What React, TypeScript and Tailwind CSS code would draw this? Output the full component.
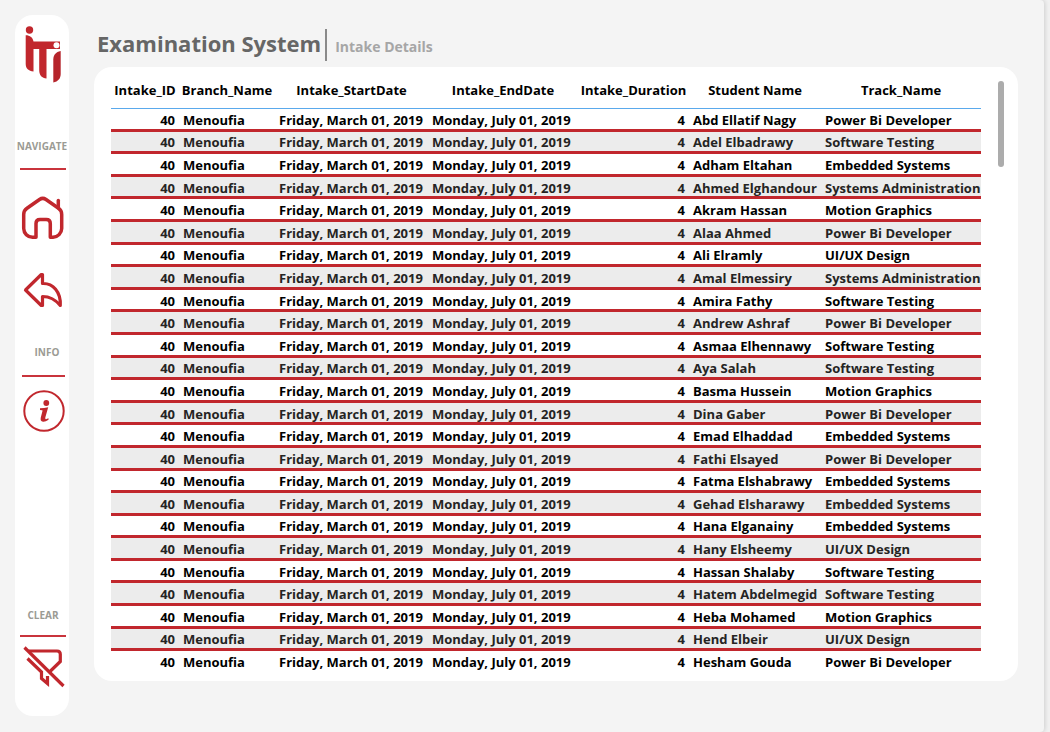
import React from "react";

type Row = [string, string];

const rows: Row[] = [
  ["Abd Ellatif Nagy", "Power Bi Developer"],
  ["Adel Elbadrawy", "Software Testing"],
  ["Adham Eltahan", "Embedded Systems"],
  ["Ahmed Elghandour", "Systems Administration"],
  ["Akram Hassan", "Motion Graphics"],
  ["Alaa Ahmed", "Power Bi Developer"],
  ["Ali Elramly", "UI/UX Design"],
  ["Amal Elmessiry", "Systems Administration"],
  ["Amira Fathy", "Software Testing"],
  ["Andrew Ashraf", "Power Bi Developer"],
  ["Asmaa Elhennawy", "Software Testing"],
  ["Aya Salah", "Software Testing"],
  ["Basma Hussein", "Motion Graphics"],
  ["Dina Gaber", "Power Bi Developer"],
  ["Emad Elhaddad", "Embedded Systems"],
  ["Fathi Elsayed", "Power Bi Developer"],
  ["Fatma Elshabrawy", "Embedded Systems"],
  ["Gehad Elsharawy", "Embedded Systems"],
  ["Hana Elganainy", "Embedded Systems"],
  ["Hany Elsheemy", "UI/UX Design"],
  ["Hassan Shalaby", "Software Testing"],
  ["Hatem Abdelmegid", "Software Testing"],
  ["Heba Mohamed", "Motion Graphics"],
  ["Hend Elbeir", "UI/UX Design"],
  ["Hesham Gouda", "Power Bi Developer"],
];

const columns = [
  { name: "Intake_ID", width: "w-[68px]" },
  { name: "Branch_Name", width: "w-24" },
  { name: "Intake_StartDate", width: "w-[153px]" },
  { name: "Intake_EndDate", width: "w-[150px]" },
  { name: "Intake_Duration", width: "w-[111px]" },
  { name: "Student Name", width: "w-[132px]" },
  { name: "Track_Name", width: "w-40" },
];

function Logo() {
  return (
    <svg viewBox="0 0 36 58" className="h-[58px] w-9" role="img" aria-label="ITI" fill="#c1272d">
      <circle cx="4.500" cy="4" r="3.700" />
      <path d="M0.700 9.200C5 9.200 8 11.500 8.500 15.500H35V23H21.500V52.500C17 52 14.200 49.500 14.200 44V23H8.500V45.500C3.500 45 0.700 42.500 0.700 38Z" />
      <circle cx="31.500" cy="19.200" r="3" fill="#fff" />
      <path d="M35.700 25C30.800 26 28.300 29 28.300 33.500V56.500C33 55.500 35.700 52.500 35.700 48Z" fill="#b5242b" />
    </svg>
  );
}

function HomeIcon() {
  return (
    <svg viewBox="0 0 44 44" className="h-11 w-11" fill="none" stroke="#c1272d" strokeWidth="3.5" strokeLinecap="round" strokeLinejoin="round" aria-hidden="true">
      <path d="M15 40V27.500Q15 23.500 19 23.500H25.300Q29.300 23.500 29.300 27.500V41.300H32A9 9 0 0 0 40.700 32.500V18.500Q40.700 14.500 37.500 12.300L25 3.500Q21.800 1.300 18.500 3.500L6 12.300Q2.700 14.500 2.700 18.500V32.500A9 9 0 0 0 11.500 41.300H15V40" />
      <path d="M37.300 12V4.500" />
    </svg>
  );
}

function BackIcon() {
  return (
    <svg viewBox="0 0 40 36" className="h-9 w-10" fill="none" stroke="#c1272d" strokeWidth="3.2" strokeLinejoin="round" aria-hidden="true">
      <path d="M19.500 2.500V11.500C30 11 38 20 37.300 33.500C32 27 27 24.500 19.500 24.500V33.500H18.300L2.500 18L18.300 2.500Z" />
    </svg>
  );
}

function InfoIcon() {
  return (
    <svg viewBox="0 0 42 42" className="h-[42px] w-[42px]" aria-hidden="true">
      <circle cx="21" cy="21" r="19.700" fill="none" stroke="#c1272d" strokeWidth="2" />
      <circle cx="23.300" cy="13" r="2.900" fill="#c1272d" />
      <path d="M17 18.300Q21 18 25.200 17.200L22.300 27.500Q22 29.300 23 29.200Q24 29 25.500 28.300L25.500 29.800Q22.500 31.900 20 31.700Q16.900 31.400 17.800 27.500L19.600 20.600Q19.600 20 17 20Z" fill="#c1272d" />
    </svg>
  );
}

function ClearIcon() {
  return (
    <svg viewBox="0 0 42 42" className="h-[42px] w-[42px]" fill="none" stroke="#c1272d" strokeWidth="3.2" aria-hidden="true">
      <path d="M1.500 1.500L40.500 40" />
      <path d="M6 5H34Q37.300 5 37.300 8.300V15.500L27 25.500" />
      <path d="M4.500 12.500L18.500 26V32.500L24.500 37.500V30" />
    </svg>
  );
}

type SectionProps = { label: string; labelClass?: string; ruleClass: string; children: React.ReactNode };

function Section({ label, labelClass = "", ruleClass, children }: SectionProps) {
  return (
    <section className="flex flex-col items-center">
      <h2 className={`text-[10px] leading-4 font-bold text-[#9b9b94] ${labelClass}`}>{label}</h2>
      <div className={`h-0.5 bg-[#c9343c] ${ruleClass}`} />
      {children}
    </section>
  );
}

export default function App() {
  return (
    <div className="min-h-screen bg-[#f0f0f0] pr-1.5">
      <div className="flex min-h-screen rounded-r bg-[#f4f4f4] pr-[26px] pl-[15px] font-['Open_Sans','Noto_Sans',sans-serif] shadow-[1px_0_4px_rgba(0,0,0,0.14)]">
        <nav className="mt-[15px] mb-4 flex w-[54px] shrink-0 flex-col items-center rounded-[18px] bg-white pt-[11px] pb-7 pl-0.5">
          <Logo />
          <div className="mt-[54px]">
            <Section label="NAVIGATE" labelClass="pr-0.5" ruleClass="mt-3.5 w-[46px]">
              <button aria-label="Home" className="mt-[26px]"><HomeIcon /></button>
              <button aria-label="Back" className="mt-8"><BackIcon /></button>
            </Section>
          </div>
          <div className="mt-9">
            <Section label="INFO" labelClass="pl-2" ruleClass="mt-[15px] w-[43px]">
              <button aria-label="Information" className="mt-[13px] pl-0.5"><InfoIcon /></button>
            </Section>
          </div>
          <div className="mt-auto">
            <Section label="CLEAR" ruleClass="mt-3 w-[46px]">
              <button aria-label="Clear filters" className="mt-[9px] pl-0.5"><ClearIcon /></button>
            </Section>
          </div>
        </nav>
        <main className="ml-[25px] flex min-w-0 flex-1 flex-col pt-[29px] pb-[51px]">
          <header className="flex h-8 items-center pl-[3px]">
            <h1 className="pb-1 text-[22px] leading-7 font-bold text-[#666]">Examination System</h1>
            <div className="ml-1 h-8 w-0.5 bg-[#8a8a8a]" />
            <p className="ml-2 pt-1 text-[14px] leading-6 font-bold text-[#a6a6a6]">Intake Details</p>
          </header>
          <div className="mt-1.5 flex flex-1 items-start rounded-[18px] bg-white pt-3.5 pr-3.5 pl-[17px]">
            <table className="h-[593px] w-[870px] table-fixed border-separate border-spacing-0 text-[13px] leading-4 font-bold whitespace-nowrap text-black">
              <thead>
                <tr className="h-7">
                  {columns.map((c) => (
                    <th key={c.name} scope="col" className={`${c.width} border-b border-[#5aa9ec] p-0 pb-2.5 text-center`}>{c.name}</th>
                  ))}
                </tr>
              </thead>
              <tbody className="[&_td]:border-b-[3px] [&_td]:border-[#c1272d] [&_td]:px-1 [&_td]:pt-0.5 [&_td]:pb-0 [&_tr:last-child_td]:border-transparent">
                {rows.map(([student, track]) => (
                  <tr key={student} className="even:bg-[#ececec] even:text-[#252423]">
                    <td className="text-right">40</td>
                    <td>Menoufia</td>
                    <td>Friday, March 01, 2019</td>
                    <td>Monday, July 01, 2019</td>
                    <td className="text-right">4</td>
                    <td>{student}</td>
                    <td>{track}</td>
                  </tr>
                ))}
              </tbody>
            </table>
            <div className="ml-auto h-[86px] w-1.5 rounded-full bg-[#acacac]" />
          </div>
        </main>
      </div>
    </div>
  );
}
